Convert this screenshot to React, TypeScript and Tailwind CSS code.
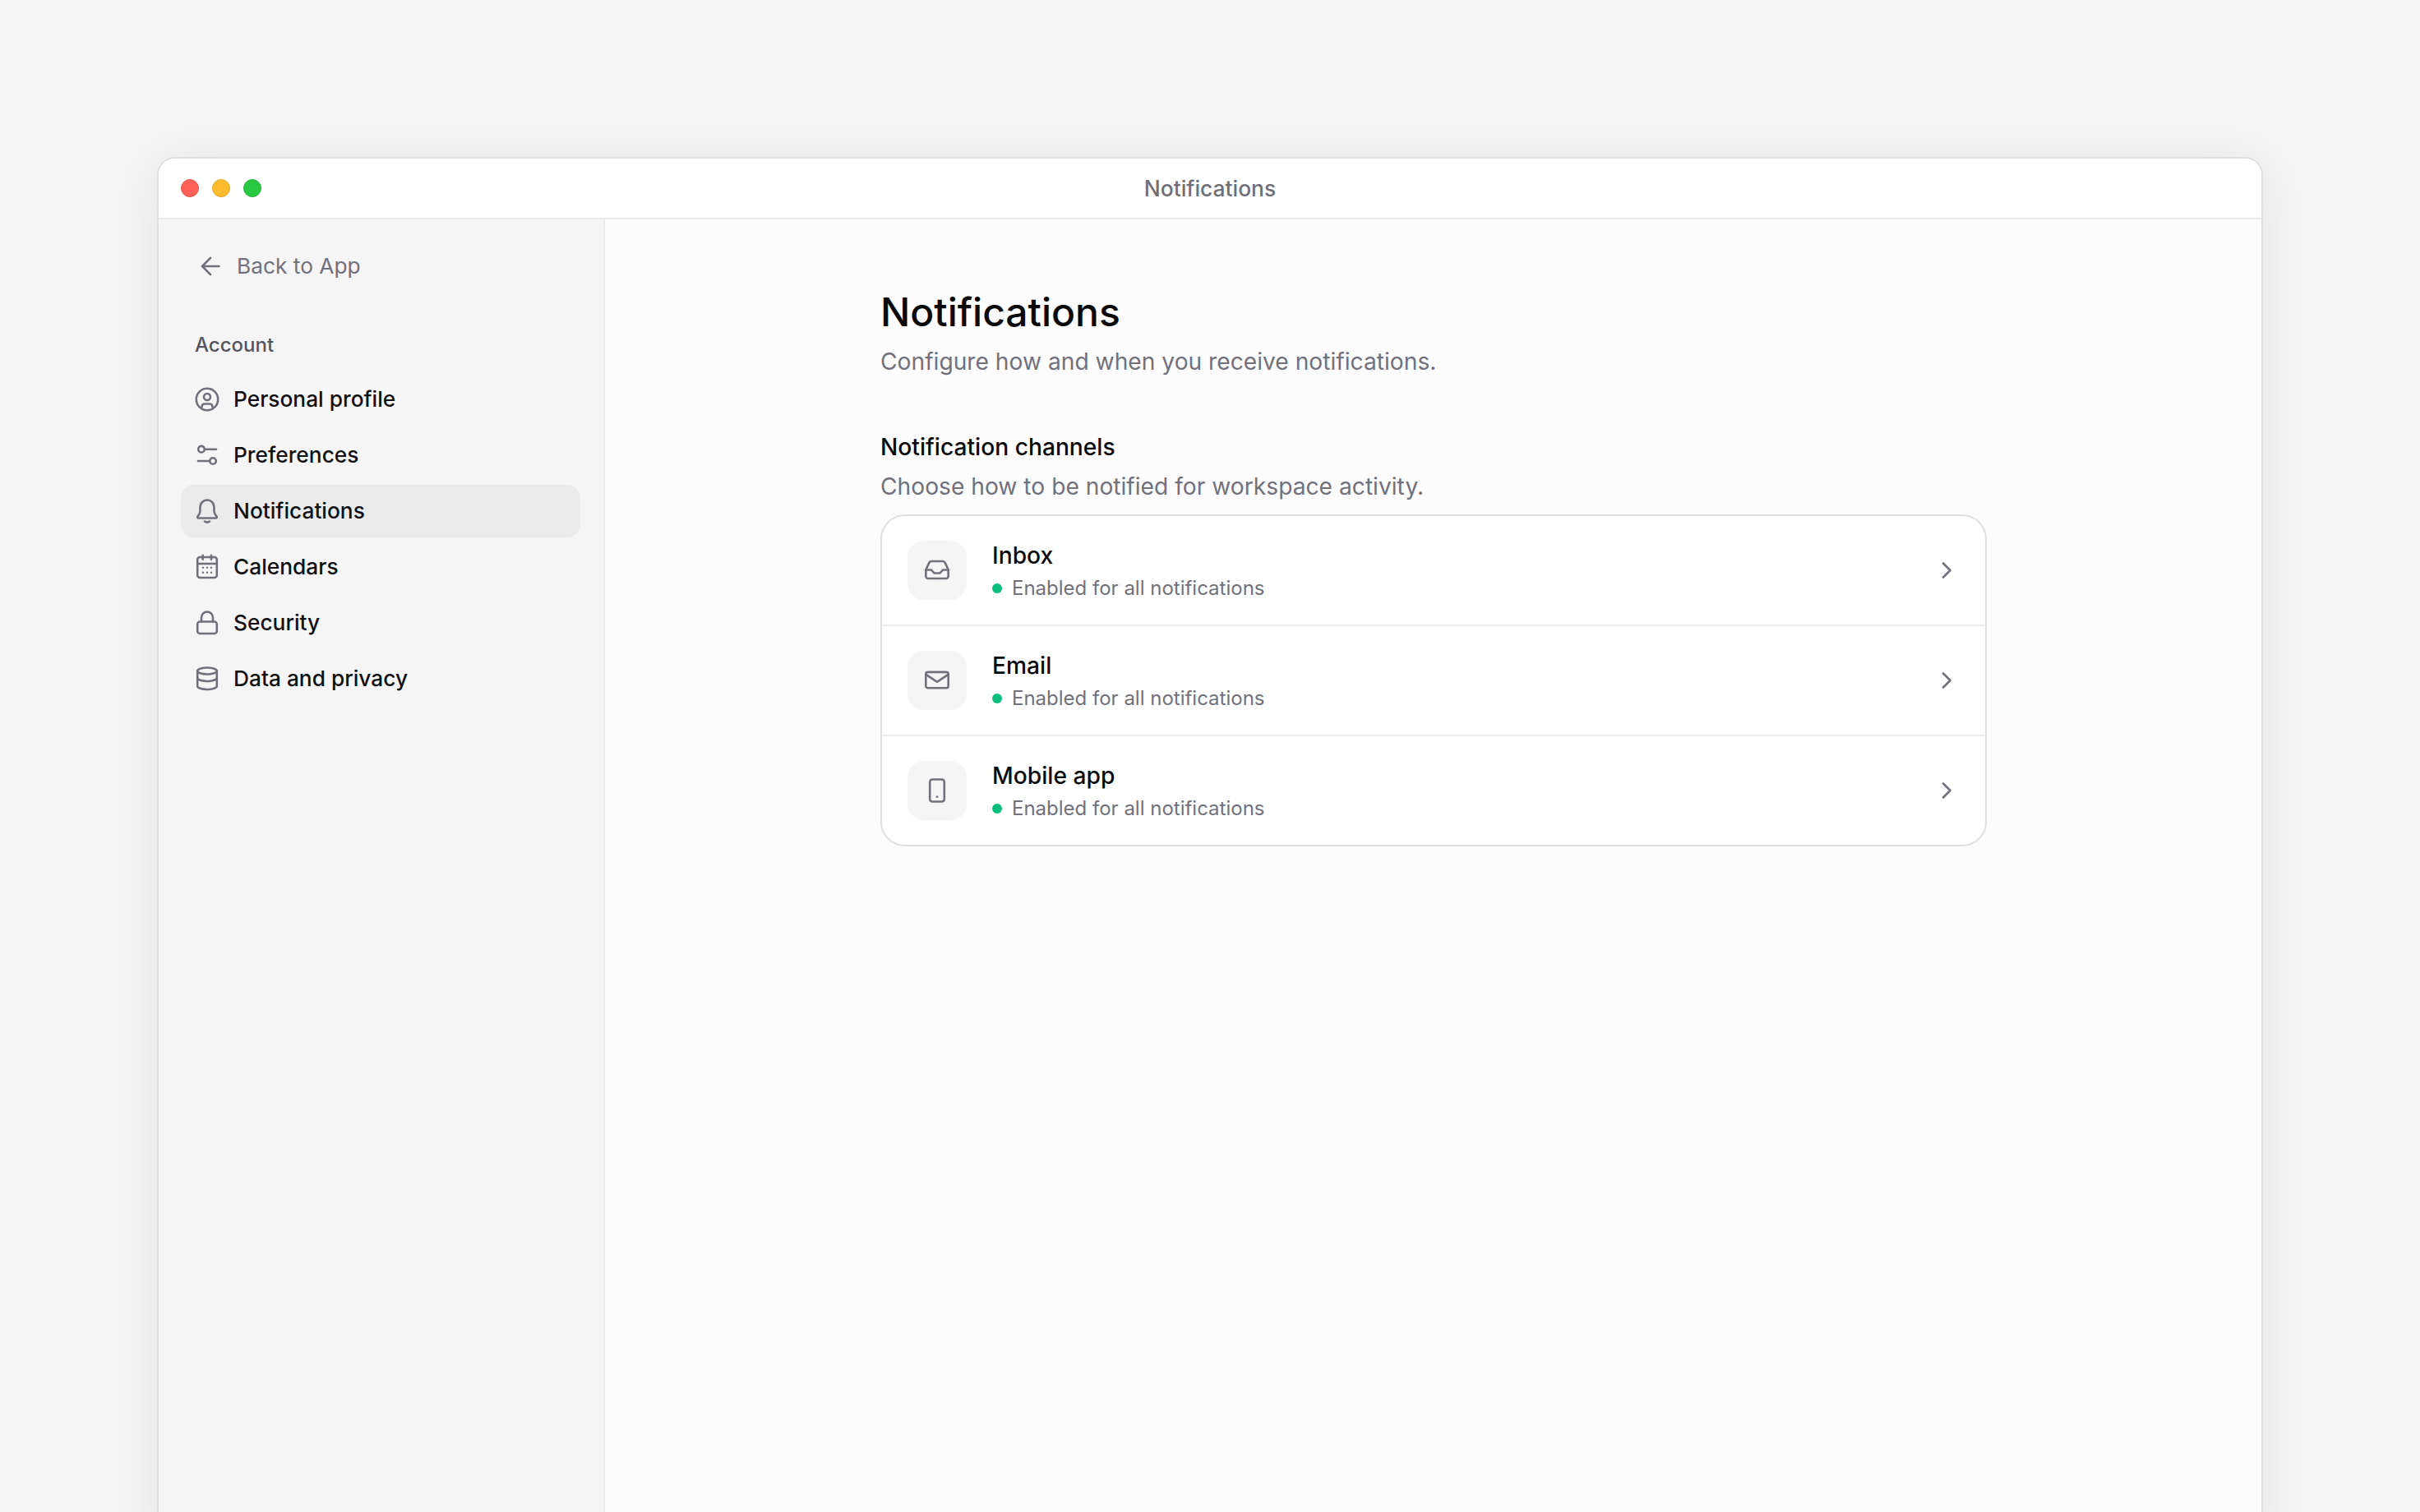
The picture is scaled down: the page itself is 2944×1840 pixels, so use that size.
const Ico = ({ children, className = "" }: { children: React.ReactNode; className?: string }) => (
  <svg
    viewBox="0 0 32 32"
    fill="none"
    stroke="currentColor"
    strokeWidth={2.6}
    strokeLinecap="round"
    strokeLinejoin="round"
    className={`w-8 h-8 shrink-0 text-[#71717c] ${className}`}
  >
    {children}
  </svg>
);

const ProfileIcon = () => (
  <Ico>
    <circle cx="16" cy="16" r="13.2" />
    <circle cx="16" cy="13" r="4" />
    <path d="M9.5 25.5V25a3.5 3.5 0 0 1 3.5-3.5h6a3.5 3.5 0 0 1 3.5 3.5v.5" />
  </Ico>
);
const PrefsIcon = () => (
  <Ico>
    <circle cx="9" cy="8.7" r="3.8" />
    <path d="M13 8.7h14" />
    <circle cx="23" cy="23" r="3.8" />
    <path d="M5 23h14" />
  </Ico>
);
const BellIcon = () => (
  <Ico>
    <path d="M16 2.5A8.5 8.5 0 0 0 7.5 11v5c0 3-1.5 4.5-3 6.5-.6.8 0 2 1 2h21c1 0 1.6-1.2 1-2-1.5-2-3-3.5-3-6.5v-5A8.5 8.5 0 0 0 16 2.5z" />
    <path d="M13 28.5q3 2.2 6 0" />
  </Ico>
);
const CalendarIcon = () => (
  <Ico>
    <rect x="4.2" y="4" width="23.6" height="25" rx="3" />
    <path d="M4.2 12h23.6M10.7 1.8v5M21 1.8v5" />
    <g fill="currentColor" stroke="none">
      <circle cx="11" cy="16.7" r="1.2" />
      <circle cx="16" cy="16.7" r="1.2" />
      <circle cx="21" cy="16.7" r="1.2" />
      <circle cx="11" cy="22.7" r="1.2" />
      <circle cx="16" cy="22.7" r="1.2" />
      <circle cx="21" cy="22.7" r="1.2" />
    </g>
  </Ico>
);
const LockIcon = () => (
  <Ico>
    <rect x="4.2" y="14.5" width="23.6" height="14.5" rx="3" />
    <path d="M9 14.5V9.5a7 7 0 0 1 14 0v5" />
  </Ico>
);
const DatabaseIcon = () => (
  <Ico>
    <ellipse cx="16" cy="6.5" rx="11.8" ry="4" />
    <path d="M4.2 6.5V25c0 2.2 5.3 4 11.8 4s11.8-1.8 11.8-4V6.5" />
    <path d="M4.2 15c0 2.2 5.3 4 11.8 4s11.8-1.8 11.8-4" />
  </Ico>
);
const InboxIcon = () => (
  <Ico>
    <path d="M2.3 15.5V23a3 3 0 0 0 3 3h21.4a3 3 0 0 0 3-3v-7.5l-4-8.6a3 3 0 0 0-2.8-1.9H9.1a3 3 0 0 0-2.8 1.9z" />
    <path d="M2.3 15.5H9l3.5 4h7l3.5-4h6.7" />
  </Ico>
);
const MailIcon = () => (
  <Ico>
    <rect x="2.3" y="5.9" width="27.4" height="19.4" rx="2.5" />
    <path d="M3 9.2 16 17.8 29 9.2" />
  </Ico>
);
const PhoneIcon = () => (
  <Ico>
    <rect x="7.2" y="2.5" width="17.6" height="27" rx="3" />
    <circle cx="16" cy="23.7" r="1.4" fill="currentColor" stroke="none" />
  </Ico>
);

const navItems = [
  { label: "Personal profile", icon: <ProfileIcon /> },
  { label: "Preferences", icon: <PrefsIcon /> },
  { label: "Notifications", icon: <BellIcon />, active: true },
  { label: "Calendars", icon: <CalendarIcon /> },
  { label: "Security", icon: <LockIcon /> },
  { label: "Data and privacy", icon: <DatabaseIcon /> },
];

const channels = [
  { name: "Inbox", icon: <InboxIcon /> },
  { name: "Email", icon: <MailIcon /> },
  { name: "Mobile app", icon: <PhoneIcon /> },
];

export default function App() {
  return (
    <div className="w-[2944px] h-[1840px] overflow-hidden bg-[#f5f5f5] pt-[191px] pl-[191px] font-['Inter',sans-serif]">
      <div className="w-[2562px] h-[1700px] flex flex-col rounded-t-[22px] border-2 border-b-0 border-[#e0e0e0] bg-white shadow-[0_8px_60px_rgba(0,0,0,0.08)]">
        {/* title bar */}
        <div className="h-[74px] shrink-0 grid grid-cols-3 items-center border-b-2 border-[#ebebeb] rounded-t-[20px] bg-white px-[27px]">
          <div className="flex items-center gap-4">
            <span className="w-[22px] h-[22px] rounded-full bg-[#ff5f57] border border-[#e5544e]" />
            <span className="w-[22px] h-[22px] rounded-full bg-[#febc2e] border border-[#e3a528]" />
            <span className="w-[22px] h-[22px] rounded-full bg-[#28c840] border border-[#24b83a]" />
          </div>
          <div className="text-center text-[26.4px] leading-8 font-medium text-[#6f6f78]">Notifications</div>
          <div />
        </div>

        <div className="flex flex-1">
          {/* sidebar */}
          <aside className="w-[543px] shrink-0 bg-[#f5f5f5] border-r-2 border-[#ebebeb] pl-[27px] pr-[28px] pt-[25px]">
            <div className="h-16 flex items-center gap-4 pl-5 text-[26.3px] text-[#71717c]">
              <Ico>
                <path d="M16 6 6 16l10 10M6 16h20.5" />
              </Ico>
              <span>Back to App</span>
            </div>
            <div className="mt-12 pl-[17px] text-[24px] leading-8 font-medium text-[#55555d]">Account</div>
            <nav className="mt-[18px] flex flex-col gap-1">
              {navItems.map((item) => (
                <div
                  key={item.label}
                  className={`h-16 flex items-center gap-4 pl-4 rounded-2xl text-[26.3px] font-medium text-[#111113] ${item.active ? "bg-[#ebebeb]" : ""}`}
                >
                  {item.icon}
                  <span>{item.label}</span>
                </div>
              ))}
            </nav>
          </aside>

          {/* main */}
          <main className="flex-1 bg-[#fcfcfc] pl-[335px] pt-[83px]">
            <div className="w-[1346px]">
              <h1 className="text-[48px] leading-[60px] font-medium text-[#0a0a0a]">Notifications</h1>
              <p className="mt-[10px] text-[28.2px] leading-10 text-[#71717c]">Configure how and when you receive notifications.</p>
              <h2 className="mt-[66px] text-[28.2px] leading-9 font-medium text-[#0a0a0a]">Notification channels</h2>
              <p className="mt-3 text-[28.2px] leading-9 text-[#71717c]">Choose how to be notified for workspace activity.</p>
              <div className="mt-4 rounded-[30px] border-2 border-[#e0e0e0] bg-white">
                {channels.map((c) => (
                  <div key={c.name} className="h-[134px] last:h-[132px] flex items-center border-b-2 last:border-b-0 border-[#ebebeb] pl-[31px] pr-[31px]">
                    <div className="w-[72px] h-[72px] rounded-[20px] bg-[#f5f5f5] flex items-center justify-center">{c.icon}</div>
                    <div className="ml-[31px] flex-1 flex flex-col gap-1 pt-1">
                      <div className="text-[28.2px] leading-9 font-medium text-[#0a0a0a]">{c.name}</div>
                      <div className="flex items-center gap-[12px] text-[24px] leading-9 text-[#71717c]">
                        <span className="w-3 h-3 rounded-full bg-[#0abf7e]" />
                        Enabled for all notifications
                      </div>
                    </div>
                    <Ico className="text-[#66666f]">
                      <path d="M12 7.5 20.5 16 12 24.5" />
                    </Ico>
                  </div>
                ))}
              </div>
            </div>
          </main>
        </div>
      </div>
    </div>
  );
}
